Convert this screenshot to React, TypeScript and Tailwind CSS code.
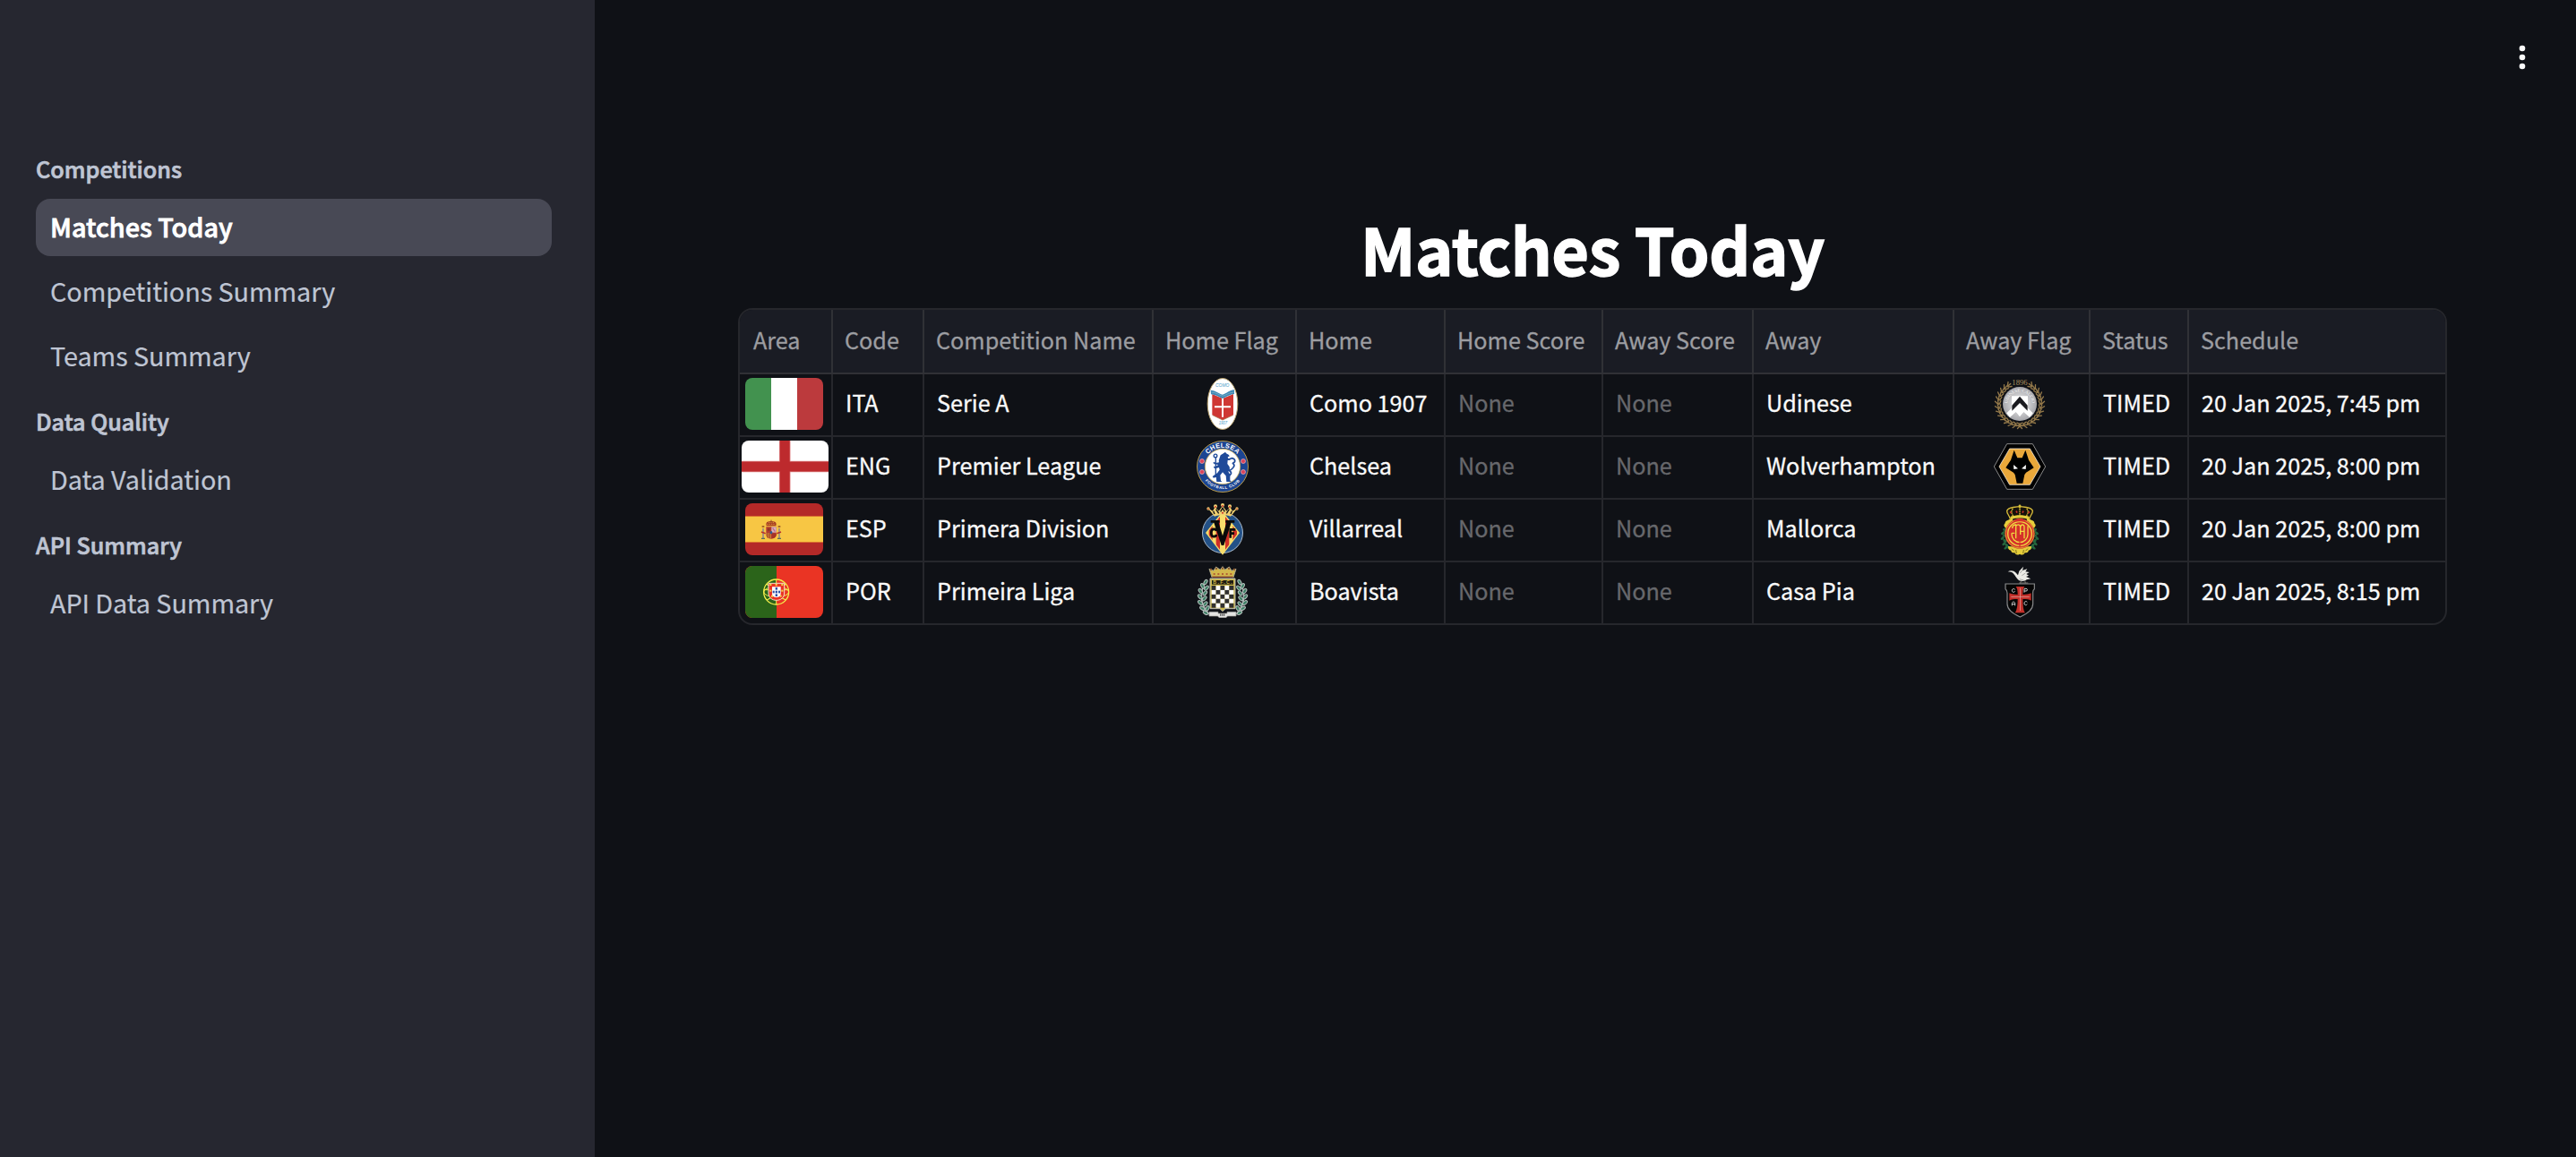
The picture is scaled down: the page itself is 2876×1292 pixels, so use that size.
import type { ReactNode } from "react";

const FONT = "font-['Noto_Sans_CJK_SC','Noto_Sans_CJK_JP',sans-serif]";

/* ---------- Country flags ---------- */

function Italy() {
  return (
    <svg className="h-[58px] w-[87px] rounded-lg" viewBox="0 0 87 58">
      <rect width="29" height="58" fill="#42924f" />
      <rect x="29" width="29" height="58" fill="#fff" />
      <rect x="58" width="29" height="58" fill="#bc3a3d" />
    </svg>
  );
}

function England() {
  return (
    <svg className="ml-[2px] h-[58px] w-[97px] shrink-0 rounded-lg" viewBox="0 0 97 58">
      <rect width="97" height="58" fill="#fff" />
      <path d="M48.2 0V58M0 29H97" stroke="#e08a8c" strokeWidth="12.6" />
      <path d="M48.2 0V58M0 29H97" stroke="#bd2a2d" strokeWidth="11" />
    </svg>
  );
}

function Spain() {
  return (
    <svg className="h-[58px] w-[87px] rounded-lg" viewBox="0 0 261 174">
      <rect width="261" height="174" fill="#b42928" />
      <rect y="42" width="261" height="90" fill="#d9702f" />
      <rect y="45" width="261" height="84" fill="#f7c644" />
      <path d="M60 84v34M114 84v34" stroke="#a9957a" strokeWidth="6" />
      <path d="M56 78h8M110 78h8" stroke="#8d4a22" strokeWidth="5" />
      <path d="M54 118h12M108 118h12" stroke="#5d6e5a" strokeWidth="4" />
      <path d="M54 96l14 5M120 96l-14 5" stroke="#b8322c" strokeWidth="5" />
      <path d="M71 76c-4-14 6-16 16-16s20 2 16 16z" fill="#a73c24" />
      <path d="M73 70h28M78 64h18" stroke="#d99a38" strokeWidth="3" strokeDasharray="4 3" />
      <path d="M87 56v8" stroke="#8d4a22" strokeWidth="3" />
      <path d="M70 79h34v26c0 9-8 14-17 14s-17-5-17-14z" fill="#b13a30" />
      <rect x="88" y="79" width="16" height="19" fill="#d8b3bd" />
      <path d="M92 83l8 12" stroke="#c06a86" strokeWidth="4" />
      <path d="M70 99h17v19c-10-1-17-5-17-13z" fill="#c98437" />
      <path d="M75 99v16M82 99v18" stroke="#a33a26" strokeWidth="3" />
      <path d="M89 101h15v5c0 6-6 11-15 12z" fill="#a63427" />
      <path d="M75 84h8v8h-8z" fill="#8d3423" />
      <ellipse cx="87" cy="98" rx="4" ry="5" fill="#2f5d8f" />
    </svg>
  );
}

function Portugal() {
  return (
    <svg className="h-[58px] w-[87px] rounded-lg" viewBox="0 0 261 174">
      <rect width="261" height="174" fill="#ea3424" />
      <rect width="105" height="174" fill="#2b641a" />
      <g fill="none" stroke="#f3ee4c">
        <circle cx="104" cy="87" r="42" strokeWidth="4" />
        <ellipse cx="104" cy="87" rx="42" ry="17" strokeWidth="3" />
        <path d="M62 80h84M104 45v84" strokeWidth="3" />
        <path d="M72 60c26 28 40 44 64 54M136 60c-26 28-40 44-64 54" strokeWidth="3.5" />
      </g>
      <path d="M78 58h53v32c0 17-13 25-26.500 25S78 107 78 90z" fill="#ea3424" stroke="#f7dfc8" strokeWidth="3" />
      <g fill="#f3d94c">
        <rect x="82" y="60" width="6" height="6" />
        <rect x="101" y="60" width="6" height="6" />
        <rect x="121" y="60" width="6" height="6" />
        <rect x="82" y="80" width="6" height="6" />
        <rect x="121" y="80" width="6" height="6" />
        <rect x="87" y="98" width="6" height="6" />
        <rect x="116" y="98" width="6" height="6" />
      </g>
      <path d="M90 70h29v22c0 9-7 13-14.500 13S90 101 90 92z" fill="#fff" />
      <g fill="#2f4fa5">
        <rect x="101" y="72" width="7" height="8" />
        <rect x="101" y="83" width="7" height="8" />
        <rect x="101" y="94" width="7" height="8" />
        <rect x="92" y="83" width="6" height="8" />
        <rect x="111" y="83" width="6" height="8" />
      </g>
    </svg>
  );
}

/* ---------- Club crests ---------- */

function Crest({ top, children }: { top: number; children: ReactNode }) {
  return (
    <svg className="size-[58px]" viewBox={`48 ${top} 174 174`} fill="none">
      {children}
    </svg>
  );
}

function Como() {
  return (
    <Crest top={36}>
      <ellipse cx="135" cy="123" rx="50.500" ry="85.500" fill="#fff" stroke="#b8a06c" strokeWidth="3" />
      <text x="134" y="67" fill="#4c9cc9" fontSize="14" fontStyle="italic" fontFamily="Liberation Sans" textAnchor="middle" textLength="46" lengthAdjust="spacingAndGlyphs">COMO</text>
      <path d="M100 90l35 15 36-15v70l-36 17-35-17z" fill="#cf3733" />
      <path d="M95 77c18 1 26 11 40 15 14-4 22-15 39-16v14c-17 2-26 10-39 15-14-5-22-13-39-14z" fill="#3f88b6" />
      <path d="M98 84c16 1 24 9 37 13 13-4 22-12 38-13" stroke="#8ab9c9" strokeWidth="2" />
      <path d="M135 105v62M108 133h54" stroke="#fff" strokeWidth="6" />
      <path d="M101 161l34 16 35-16" stroke="#a06a3e" strokeWidth="2" />
      <text x="136" y="191" fill="#4c9cc9" fontSize="14" fontStyle="italic" fontFamily="Liberation Sans" textAnchor="middle" textLength="28" lengthAdjust="spacingAndGlyphs">1907</text>
    </Crest>
  );
}

function Chelsea() {
  return (
    <Crest top={246}>
      <defs>
        <path id="chelsea-top" d="M71 333a64 64 0 0 1 128 0" />
        <path id="chelsea-bottom" d="M60 333a75 75 0 0 0 150 0" />
      </defs>
      <circle cx="135" cy="333" r="85.500" fill="#1c4592" stroke="#b99a4a" strokeWidth="3" />
      <circle cx="135" cy="333" r="59" fill="#fff" stroke="#c9ac58" strokeWidth="2.500" />
      <text fill="#fff" fontSize="22" fontWeight="700" fontFamily="Liberation Sans" textAnchor="middle" letterSpacing="1">
        <textPath href="#chelsea-top" startOffset="50%">CHELSEA</textPath>
      </text>
      <text fill="#fff" fontSize="13" fontWeight="700" fontFamily="Liberation Sans" textAnchor="middle" letterSpacing="1.800">
        <textPath href="#chelsea-bottom" startOffset="50%">FOOTBALL CLUB</textPath>
      </text>
      <g fill="#d9425a" stroke="#f0b9bd" strokeWidth="2">
        <circle cx="66" cy="315" r="7.500" />
        <circle cx="66" cy="351" r="7.500" />
        <circle cx="204" cy="315" r="7.500" />
        <circle cx="204" cy="351" r="7.500" />
      </g>
      <g stroke="#1f4a99" strokeLinecap="round" strokeLinejoin="round">
        <circle cx="111" cy="297" r="5.500" strokeWidth="4" />
        <path d="M112 303v64" strokeWidth="4" />
        <path d="M150 366c14-4 18-13 8-19 12-8 22-18 11-25 12-5 8-16-4-17l-8 3" strokeWidth="5" />
      </g>
      <path d="M140 287l4-3 3 5 9 5 2 5-6 1 2 6 8 1-2 4-8 1-1 12 7 10 1 10-5 6 6 10v19l4 5h-16l-2-20-11-12-8 10 2 18 4 4h-18l-2-16-8 3-4-4 4-4 12-8 8-11-2-8-12 4-6-3 1-5 6 1 8-6-12-2-5-4 3-4 6 4 11-2-1-6 6-18z" fill="#1f4a99" />
    </Crest>
  );
}

function Villarreal() {
  return (
    <Crest top={456}>
      <circle cx="135" cy="555" r="67.500" fill="#235187" stroke="#cbd8e4" strokeWidth="2.500" />
      <path d="M135 483l57 72-57 74-57-74z" fill="#f7dd6b" />
      <clipPath id="villarreal-diamond">
        <path d="M135 490l52 65-52 68-52-68z" />
      </clipPath>
      <g clipPath="url(#villarreal-diamond)" fill="#cf2f27">
        <rect x="89" y="480" width="12" height="150" />
        <rect x="113" y="480" width="13" height="150" />
        <rect x="144" y="480" width="13" height="150" />
        <rect x="169" y="480" width="14" height="150" />
      </g>
      <path d="M95 513h30v8h-3l13 44 13-44h-3v-8h30v8h-11l-25 76h-8l-25-76H95z" fill="#0a0a0a" />
      <path d="M114 549c-2-10-17-8-17 4v4c0 12 15 14 17 4" stroke="#0a0a0a" strokeWidth="8" />
      <path d="M161 572v-28h17M161 557h13" stroke="#0a0a0a" strokeWidth="8" />
      <path d="M108 500L85 472l17 10 8-14 12 14 13-18 13 18 12-14 8 14 17-10-23 28c-16-7-38-7-54 0z" fill="#efd070" />
      <path d="M108 492l-4-10M122 490l-9-14M128 484l7-12 7 12M148 490l9-14M162 492l4-10" stroke="#101116" strokeWidth="4" />
      <g fill="#f2d678">
        <circle cx="87" cy="474" r="5" />
        <circle cx="111" cy="466" r="6" />
        <circle cx="135" cy="462" r="6" />
        <circle cx="159" cy="466" r="6" />
        <circle cx="183" cy="474" r="5" />
      </g>
      <g fill="#cf2f27">
        <circle cx="87" cy="475" r="2.500" />
        <circle cx="111" cy="468" r="3" />
        <circle cx="135" cy="465" r="3" />
        <circle cx="159" cy="468" r="3" />
        <circle cx="183" cy="475" r="2.500" />
        <circle cx="135" cy="488" r="3" />
      </g>
    </Crest>
  );
}

const BOAVISTA_LEAVES = [
  [78, 720, 30],
  [68, 733, -30],
  [81, 740, 40],
  [61, 750, -35],
  [76, 757, 40],
  [59, 769, -40],
  [74, 775, 45],
  [60, 789, -50],
  [77, 793, 40],
  [67, 808, -60],
  [84, 808, 30],
  [78, 823, -60],
];

const BOARD = [0, 1, 2, 3, 4].flatMap((row) => [0, 1, 2, 3, 4].map((col) => [col, row]));

function BoavistaBranch() {
  return (
    <g>
      <path d="M80 716c-22 34-24 76 10 112" stroke="#a9b3b1" strokeWidth="5" />
      {BOAVISTA_LEAVES.map(([x, y, angle]) => (
        <ellipse
          key={`${x}-${y}`}
          cx={x}
          cy={y}
          rx="5"
          ry="9"
          transform={`rotate(${angle} ${x} ${y})`}
          fill="#3f8066"
          stroke="#b4bfbc"
          strokeWidth="3"
        />
      ))}
    </g>
  );
}

function Boavista() {
  return (
    <Crest top={666}>
      <BoavistaBranch />
      <g transform="translate(270 0) scale(-1 1)">
        <BoavistaBranch />
      </g>
      <path d="M99 704l-9-28 15 6 8-13 14 10 8-11 8 11 14-10 8 13 15-6-9 28z" fill="#d3b84c" stroke="#aaa68d" strokeWidth="3" />
      <g fill="#8f5b2d">
        <circle cx="96" cy="678" r="3.500" />
        <circle cx="114" cy="675" r="3.500" />
        <circle cx="135" cy="674" r="3.500" />
        <circle cx="156" cy="675" r="3.500" />
        <circle cx="174" cy="678" r="3.500" />
      </g>
      <path d="M104 693h62" stroke="#a8452d" strokeWidth="4" strokeDasharray="6 8" />
      <path d="M100 703h70" stroke="#7d3a2a" strokeWidth="4" />
      <path d="M93 708h84v101h-33l-9 9-9-9H93z" fill="#cdb94a" stroke="#b9b9b5" strokeWidth="3" />
      <rect x="99" y="714" width="72" height="14" fill="#1e1c12" />
      <text x="135" y="727" fill="#cdb94a" fontSize="16" fontWeight="700" fontFamily="Liberation Sans" textAnchor="middle" textLength="64">B.F.C.</text>
      {BOARD.map(([col, row]) => (
        <rect
          key={`${col}-${row}`}
          x={98 + col * 14.8}
          y={732 + row * 14.8}
          width="14.800"
          height="14.800"
          fill={(row + col) % 2 ? "#ffffff" : "#303030"}
        />
      ))}
      <path d="M90 820h30v5h30v-5h30v14h-28l-6 5h-22l-6-5H90z" fill="#e4e4e2" stroke="#9a9a98" strokeWidth="2" />
      <path d="M126 830h18" stroke="#555" strokeWidth="7" strokeDasharray="4 2" />
    </Crest>
  );
}

const WREATH_ANGLES = Array.from({ length: 14 }, (_, i) => 30 + i * 11.3);

function Udinese() {
  return (
    <Crest top={36}>
      <defs>
        <radialGradient id="udinese-disc" cx="50%" cy="50%" r="52%">
          <stop offset="0%" stopColor="#f4f4f5" />
          <stop offset="60%" stopColor="#c4c4c7" />
          <stop offset="100%" stopColor="#a3a3a8" />
        </radialGradient>
        <path id="udinese-arc" d="M93 126a42 44 0 0 1 84 0" />
      </defs>
      {[1, -1].map((side) => (
        <g
          key={side}
          transform={side === 1 ? undefined : "translate(270 0) scale(-1 1)"}
          stroke="#94794a"
          strokeWidth="4"
          strokeLinecap="round"
        >
          {WREATH_ANGLES.map((a) => (
            <path key={a} transform={`rotate(${a} 135 123)`} d="M141 51l-9-11M141 52l-13-3M140 55l-11 4" />
          ))}
        </g>
      ))}
      <text x="135" y="60" fill="#ab9160" fontSize="27" fontFamily="Liberation Serif" textAnchor="middle" textLength="52" lengthAdjust="spacingAndGlyphs">1896</text>
      <circle cx="135" cy="123" r="57" fill="url(#udinese-disc)" />
      <text fill="#f7f7f7" fontSize="15" fontFamily="Liberation Serif" textAnchor="middle">
        <textPath href="#udinese-arc" startOffset="50%">UDINESE·CALCIO</textPath>
      </text>
      <path d="M108 97h54v40l17 17-11 14-20-18-13 14-13-14-20 18-11-14 17-17z" fill="#fff" />
      <path d="M135 98l26 30v18l-26-26-26 26v-18z" fill="#1a1a1f" />
      <path d="M135 126l16 18-16 22-16-22z" fill="#fff" />
    </Crest>
  );
}

function Wolves() {
  return (
    <Crest top={246}>
      <path d="M92 257h86l43 76-43 76H92L49 333z" fill="#000" stroke="#a3a3a3" strokeWidth="2.500" />
      <path d="M101 273h68l35 60-35 61h-68l-35-61z" fill="#eaa83a" stroke="#fff" strokeWidth="2" />
      <path d="M116 278l11 26h16l11-26 11 33 17 26-26 16-5 7-6 29h-20l-6-29-5-7-26-16 17-26z" fill="#000" />
      <path d="M114 327l15 13-14 2zM156 327l-15 13 14 2z" fill="#fff" />
    </Crest>
  );
}

const MALLORCA_LAUREL = [
  [84, 546],
  [78, 556],
  [86, 566],
  [77, 573],
  [86, 582],
  [82, 592],
  [92, 597],
  [88, 605],
];

function Mallorca() {
  return (
    <Crest top={456}>
      {[1, -1].map((side) => (
        <g key={side} transform={side === 1 ? undefined : "translate(270 0) scale(-1 1)"}>
          <path d="M88 538c-14 24-10 50 10 70" stroke="#1f5a37" strokeWidth="5" />
          {MALLORCA_LAUREL.map(([x, y], i) => (
            <ellipse key={y} cx={x} cy={y} rx="4" ry="7" transform={`rotate(${i % 2 ? 50 : -45} ${x} ${y})`} fill="#25683f" />
          ))}
          <path d="M112 507c-8-4-11 4-18 6-10 3-6 10-12 15 0 8 4 9 8 12l20-14z" fill="#e6ce3b" />
          <path d="M96 600c0 12 4 12 10 14 0 8 8 8 12 8 4 8 10 8 17 4v-24z" fill="#e6ce3b" />
          <path d="M108 608l8 8M122 612l2 12" stroke="#7d6f1e" strokeWidth="3" />
        </g>
      ))}
      <circle cx="135" cy="558" r="50" fill="#d5302b" />
      <circle cx="135" cy="558" r="40" stroke="#f0d941" strokeWidth="4" />
      <circle cx="135" cy="558" r="48" stroke="#e6ce3b" strokeWidth="2" />
      <path d="M108 556v4a27 27 0 0 0 54 0v-28M122 574v-46c-8 0-12 5-12 12M122 532c8-8 15-4 15 5v24M137 538c0-12 13-14 13-2v38M137 550h13M108 556h10" stroke="#f0d941" strokeWidth="4" />
      <path d="M135 586v16" stroke="#d5302b" strokeWidth="4" />
      <path d="M102 506c-2-10-10-14-10-24 2-13 26-13 43-15 17 2 41 2 43 15 0 10-8 14-10 24-20-6-46-6-66 0z" fill="#15110a" stroke="#d9be3c" strokeWidth="4" />
      <path d="M135 468v32M112 474c-8 8-4 18 2 26M158 474c8 8 4 18-2 26" stroke="#e6ce3b" strokeWidth="4" strokeDasharray="5 2" />
      <path d="M102 484l5 5M123 482l3 6M147 482l-3 6M168 484l-5 5" stroke="#cf2f27" strokeWidth="5" />
      <path d="M104 500c20-6 42-6 62 0l-2 9c-18-5-40-5-58 0z" fill="#e6ce3b" />
      <path d="M120 511c10-6 20-6 30 0l6 6h-42z" fill="#d5302b" />
      <path d="M135 460v10M131 464h8" stroke="#e6ce3b" strokeWidth="3" />
    </Crest>
  );
}

function CasaPia() {
  return (
    <Crest top={666}>
      <path d="M95 685c8-5 20-4 26 3l8 9 4-14 14-15-3 13 16-5-6 9 13 2-10 6 8 5-9 4 16 7-14 3c-10 8-26 6-32-4-6-8-12-20-20-22z" fill="#ecebe6" />
      <path d="M136 690l8-10M142 698l12-8M134 710l14 4" stroke="#8d8d8a" strokeWidth="2" />
      <path d="M140 716l-4 9M152 714l2 10M133 723h30" stroke="#77756d" strokeWidth="3" />
      <path d="M87 726h97v17c-6 4-5 8-5 14v36c0 20-20 34-43 44-23-10-43-24-43-44v-36c0-6 0-10-6-14z" fill="#050505" stroke="#8a8b8d" strokeWidth="3.500" />
      <path d="M122 735h29c-5 6-6 15-6 27 12 0 22-1 28-5v25c-6-4-16-5-28-5 0 21 2 39 8 46h-34c6-7 9-25 9-46-12 0-20 1-28 5v-25c8 4 16 5 28 5 0-12-1-21-6-27z" fill="#c4312b" />
      <path d="M136.500 740v76M106 769.500h61" stroke="#e0a9a2" strokeWidth="2" />
      <g fill="none" stroke="#c9c9c9" strokeWidth="3">
        <path d="M119 745c-3-4-10-3-10 3s6 8 10 3" />
        <path d="M150 755v-13h6c6 0 6 8 0 8h-6" />
        <path d="M109 799v-8c0-6 10-6 10 0v8M109 794h10" />
        <path d="M160 787c-3-4-10-3-10 4s7 8 10 3" />
      </g>
    </Crest>
  );
}

/* ---------- Data ---------- */

const COLUMNS = [
  "Area",
  "Code",
  "Competition Name",
  "Home Flag",
  "Home",
  "Home Score",
  "Away Score",
  "Away",
  "Away Flag",
  "Status",
  "Schedule",
];

const MATCHES = [
  { flag: <Italy />, code: "ITA", name: "Serie A", homeCrest: <Como />, home: "Como 1907", away: "Udinese", awayCrest: <Udinese />, schedule: "20 Jan 2025, 7:45 pm" },
  { flag: <England />, code: "ENG", name: "Premier League", homeCrest: <Chelsea />, home: "Chelsea", away: "Wolverhampton", awayCrest: <Wolves />, schedule: "20 Jan 2025, 8:00 pm" },
  { flag: <Spain />, code: "ESP", name: "Primera Division", homeCrest: <Villarreal />, home: "Villarreal", away: "Mallorca", awayCrest: <Mallorca />, schedule: "20 Jan 2025, 8:00 pm" },
  { flag: <Portugal />, code: "POR", name: "Primeira Liga", homeCrest: <Boavista />, home: "Boavista", away: "Casa Pia", awayCrest: <CasaPia />, schedule: "20 Jan 2025, 8:15 pm" },
];

const NAV = [
  { section: "Competitions", items: ["Matches Today", "Competitions Summary", "Teams Summary"] },
  { section: "Data Quality", items: ["Data Validation"] },
  { section: "API Summary", items: ["API Data Summary"] },
];

const GRID =
  "grid grid-cols-[104px_102px_256px_160px_166px_176px_168px_224px_152px_110px_286px]";

/* ---------- Layout ---------- */

function Sidebar() {
  return (
    <aside className="w-[664px] shrink-0 bg-[#262730] pt-[148px] pr-12 pl-10">
      {NAV.map(({ section, items }) => (
        <section key={section}>
          <h2 className="h-[74px] pt-[3px] text-[25.2px] leading-[74px] font-medium text-[#bfc5d3] [-webkit-text-stroke:0.7px_#bfc5d3]">
            {section}
          </h2>
          <ul className="flex flex-col gap-2">
            {items.map((item) => (
              <li
                key={item}
                className={
                  item === "Matches Today"
                    ? "flex h-16 items-center rounded-2xl bg-[#484955] px-4 pb-[2px] text-[28.8px] leading-none font-medium text-white [-webkit-text-stroke:0.8px_white]"
                    : "flex h-16 items-center rounded-2xl px-4 pb-[2px] text-[28.8px] leading-none tracking-[-0.08px] text-[#bfc5d3] [-webkit-text-stroke:0.2px_#bfc5d3]"
                }
              >
                {item}
              </li>
            ))}
          </ul>
        </section>
      ))}
    </aside>
  );
}

function TextCell({ children, muted = false }: { children: ReactNode; muted?: boolean }) {
  return (
    <div
      className={
        muted
          ? "flex items-center border-r-2 border-[#26272c] pb-[5px] pl-3.5 whitespace-nowrap text-[#67686c] [-webkit-text-stroke:0.3px_#67686c]"
          : "flex items-center border-r-2 border-[#26272c] pb-[5px] pl-3.5 whitespace-nowrap text-[#fafafa] [-webkit-text-stroke:0.3px_#fafafa] last:border-r-0"
      }
    >
      {children}
    </div>
  );
}

function FlagCell({ children }: { children: ReactNode }) {
  return <div className="flex items-center justify-center border-r-2 border-[#26272c] pr-[3px] pb-[2px]">{children}</div>;
}

function CrestCell({ children }: { children: ReactNode }) {
  return <div className="flex items-center justify-center border-r-2 border-[#26272c] pr-1 pb-[2px]">{children}</div>;
}

function MatchTable() {
  return (
    <div className="w-[1908px] overflow-hidden rounded-2xl border-2 border-[#26272c] text-[25.2px] leading-none">
      <div className={`${GRID} h-[72px] border-b-2 border-[#303136] bg-[#1a1c24] text-[#9c9da1] [-webkit-text-stroke:0.3px_#9c9da1]`}>
        {COLUMNS.map((title) => (
          <div
            key={title}
            className="flex items-center border-r-2 border-[#303136] pb-[3px] pl-[13px] whitespace-nowrap first:pl-[15px] last:border-r-0"
          >
            {title}
          </div>
        ))}
      </div>
      {MATCHES.map((m) => (
        <div key={m.code} className={`${GRID} h-[70px] border-b-2 border-[#26272c] last:h-[68px] last:border-b-0`}>
          <FlagCell>{m.flag}</FlagCell>
          <TextCell>{m.code}</TextCell>
          <TextCell>{m.name}</TextCell>
          <CrestCell>{m.homeCrest}</CrestCell>
          <TextCell>{m.home}</TextCell>
          <TextCell muted>None</TextCell>
          <TextCell muted>None</TextCell>
          <TextCell>{m.away}</TextCell>
          <CrestCell>{m.awayCrest}</CrestCell>
          <TextCell>TIMED</TextCell>
          <TextCell>{m.schedule}</TextCell>
        </div>
      ))}
    </div>
  );
}

export default function App() {
  return (
    <div className={`flex h-[1292px] w-full overflow-hidden bg-[#0f1116] ${FONT}`}>
      <Sidebar />
      <main className="flex min-w-0 flex-1 flex-col pl-[160px]">
        <header className="flex h-[128px] justify-end pt-12 pr-[54px]">
          <button aria-label="Menu" className="h-8 w-3">
            <svg className="h-8 w-3" viewBox="0 0 12 32" fill="#fafafa">
              <circle cx="6" cy="6" r="3.300" />
              <circle cx="6" cy="16" r="3.300" />
              <circle cx="6" cy="26" r="3.300" />
            </svg>
          </button>
        </header>
        <h1 className="mt-[101px] h-[96px] w-[1908px] text-center text-[72px] leading-[96px] font-bold tracking-[-0.45px] text-white [-webkit-text-stroke:1.4px_white]">
          Matches Today
        </h1>
        <div className="mt-[19px]">
          <MatchTable />
        </div>
      </main>
    </div>
  );
}
